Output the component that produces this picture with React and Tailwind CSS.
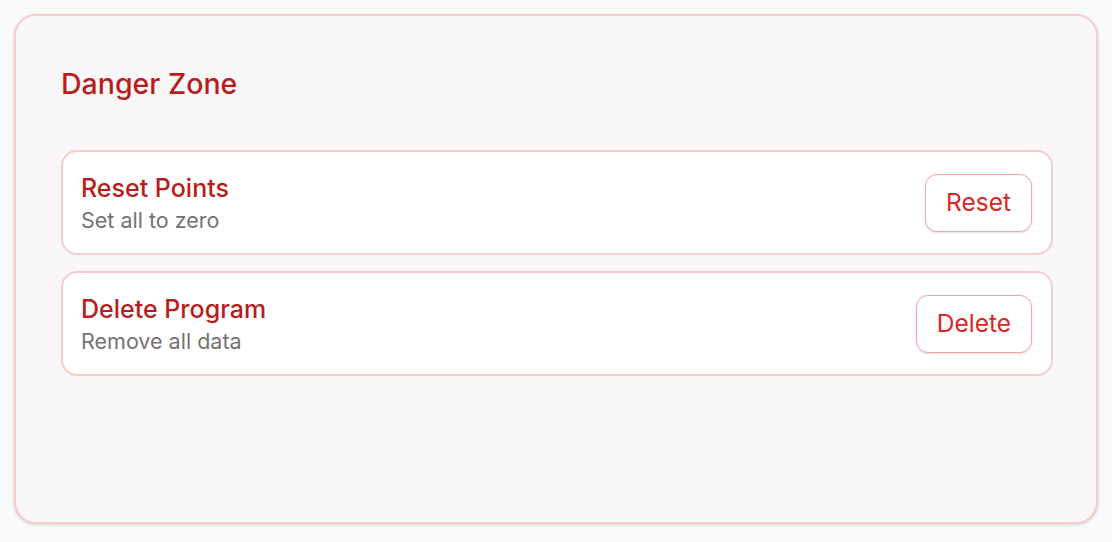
const actions = [
  { title: 'Reset Points', desc: 'Set all to zero', label: 'Reset' },
  { title: 'Delete Program', desc: 'Remove all data', label: 'Delete' },
]

function ActionRow({ title, desc, label }) {
  return (
    <div className="flex h-[105px] items-center justify-between rounded-2xl border-2 border-[#f9cbcb] bg-white pl-[18px] pr-[19px]">
      <div className="flex flex-col pt-0.5">
        <span className="text-[25px] font-medium leading-8 text-[#b91c1c]">{title}</span>
        <span className="text-[21.5px] leading-8 text-[#737373]">{desc}</span>
      </div>
      <button className="h-[58px] rounded-xl border border-[#f5a3a3] bg-white px-5 text-[24.5px] text-[#dc2626] shadow-sm">
        {label}
      </button>
    </div>
  )
}

export default function App() {
  return (
    <div className="min-h-[542px] bg-slate-50 p-[14px] font-['Inter',sans-serif]">
      <div className="h-[510px] rounded-[22px] border-2 border-[#f9cbcb] bg-[#faf7f8] pl-[45px] pr-[43px] pt-[52px] shadow-[0_1px_3px_rgba(0,0,0,0.18)]">
        <h2 className="text-[28.5px] font-medium leading-8 text-[#b91c1c]">Danger Zone</h2>
        <div className="mt-[50px] flex flex-col gap-[16px]">
          {actions.map((a) => (
            <ActionRow key={a.label} {...a} />
          ))}
        </div>
      </div>
    </div>
  )
}
